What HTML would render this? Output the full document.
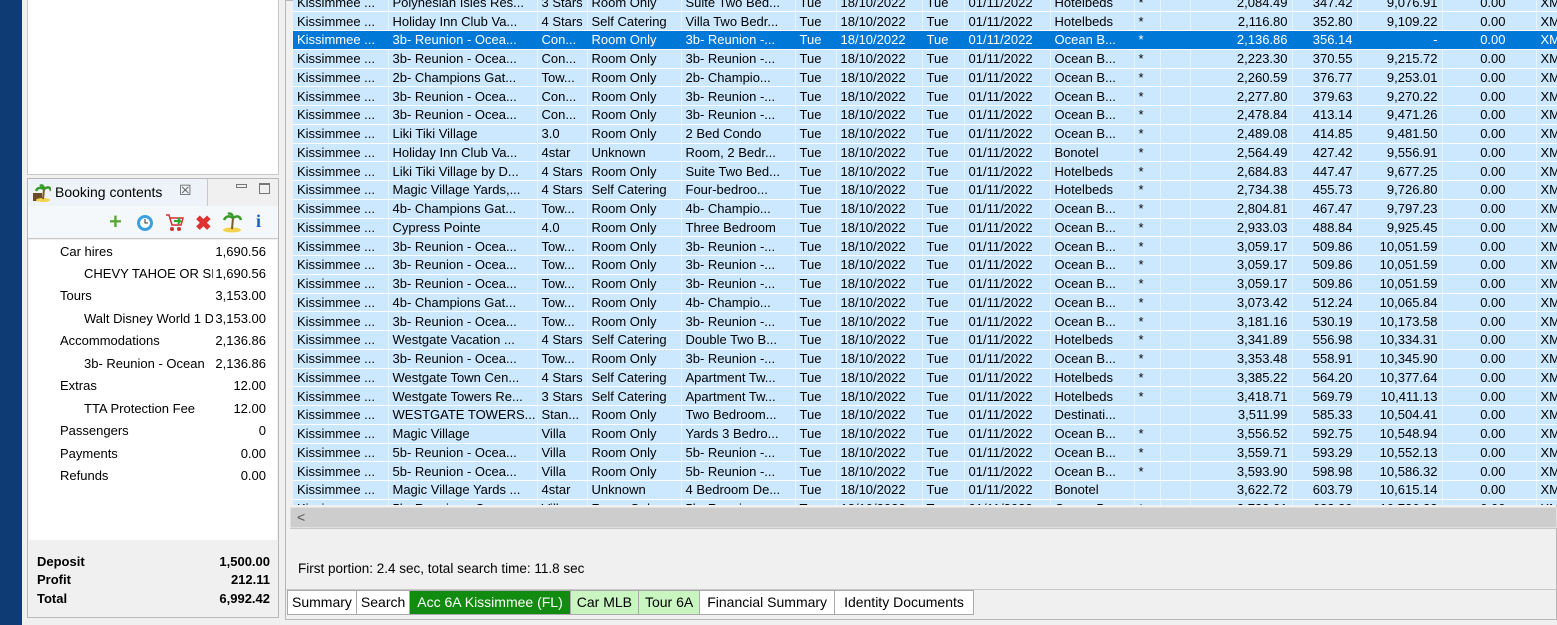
<!DOCTYPE html>
<html><head><meta charset="utf-8"><style>
*{margin:0;padding:0;box-sizing:border-box}
body{width:1557px;height:625px;overflow:hidden;background:#f0f0f0;font-family:"Liberation Sans",sans-serif;font-size:13px;color:#000;position:relative}
.abs{position:absolute}
#bar{left:0;top:0;width:22px;height:625px;background:#0e3b74}
#lp{left:26px;top:0;width:255px;height:620px;background:#f0f0f0}
#topbox{left:27px;top:0;width:252px;height:175px;background:#fff;border:1px solid #c8c8c8;border-top:none}
#bc{left:27px;top:178px;width:252px;height:440px;border:1px solid #b8b8b8;background:#f0f0f0}
#tab{left:28px;top:179px;width:180px;height:27px;background:#eef3f9;border-right:1px solid #c8c8c8}
#tb{left:28px;top:206px;width:250px;height:33px;background:#f5f8fb;border-bottom:1px solid #c8c8c8}
#list{left:29px;top:240px;width:248px;height:300px;background:#fff}
.li{position:absolute;height:20px;line-height:20px;white-space:nowrap;overflow:hidden}
.lv{position:absolute;right:8px;text-align:right;background:#fff;padding-left:2px}
#tot div{position:absolute;font-weight:bold;font-size:13px}
#rp{left:285px;top:0;width:1272px;height:620px;border:1px solid #b8b8b8;background:#f0f0f0}
#grid{left:293px;top:0;width:1264px;height:505px;overflow:hidden;background:#fff}
table{border-collapse:collapse;table-layout:fixed;position:absolute;left:0;top:-7px;width:1303px}
td{height:18.76px;padding:0 4px;white-space:nowrap;overflow:hidden;background:#cce8ff;border-right:1px solid #e8f4ff;border-bottom:1px solid #fff;font-size:13px;line-height:17px}
td.r{text-align:right}
td.z{padding-right:30px}
tr.s td{background:#0078d7;color:#fff;border-right-color:#0078d7}
#sb{left:290px;top:507px;width:1267px;height:21px;background:#cdcdcd;border:1px solid #e0e0e0}
#tabs{left:287px;top:590px;height:25px;display:flex}
#tabs div{border:1px solid #aaa;border-left:none;padding:0 5px;line-height:23px;background:#fff;font-size:14px}
</style></head><body>
<div id="bar" class="abs"></div>
<div id="lp" class="abs"></div>
<div id="topbox" class="abs"></div>
<div id="bc" class="abs"></div>
<div id="tab" class="abs">
<svg class="abs" style="left:3px;top:4px" width="20" height="20"><rect x="2" y="10" width="9" height="8" fill="#6b4a2a"/><ellipse cx="12" cy="17" rx="7" ry="2" fill="#f2d24a"/><path d="M12 16 L13 6" stroke="#7a5a2a" stroke-width="2"/><path d="M13 6 Q7 3 5 8 M13 6 Q19 2 20 8 M13 6 Q12 1 9 3" stroke="#3a9a2a" stroke-width="2.5" fill="none"/></svg>
<div class="abs" style="left:27px;top:5px;font-size:14px">Booking contents</div>
<div class="abs" style="left:151px;top:3px;font-size:14px;color:#555">☒</div>
</div>
<div class="abs" style="left:236px;top:184px;width:11px;height:4px;border:1px solid #777"></div>
<div class="abs" style="left:259px;top:183px;width:11px;height:11px;border:1px solid #777;border-top-width:2px"></div>
<div id="tb" class="abs">
<div class="abs" style="left:81px;top:6px;color:#5aa833;font-size:22px;font-weight:bold;line-height:20px">+</div>
<svg class="abs" style="left:107px;top:7px" width="20" height="20"><circle cx="10" cy="10" r="8" fill="#3aa0e0"/><circle cx="10" cy="10" r="5" fill="#fff"/><path d="M10 6v4h3" stroke="#333" fill="none"/></svg>
<svg class="abs" style="left:136px;top:6px" width="22" height="22"><path d="M2 3h3l3 10h9l2-7H6" stroke="#c33" fill="none" stroke-width="1.5"/><circle cx="8" cy="17" r="2" fill="#c33"/><circle cx="15" cy="17" r="2" fill="#c33"/><path d="M10 9h6l-2-3M16 9l-2 3" stroke="#2a2" stroke-width="2" fill="none"/></svg>
<div class="abs" style="left:167px;top:5px;color:#e03030;font-size:20px;font-weight:bold">✖</div>
<svg class="abs" style="left:193px;top:5px" width="22" height="22"><ellipse cx="11" cy="19" rx="9" ry="2.5" fill="#f2d24a"/><path d="M11 18 L12 7" stroke="#7a5a2a" stroke-width="2"/><path d="M12 7 Q6 3 3 9 M12 7 Q18 3 20 9 M12 7 Q11 1 7 3" stroke="#3a9a2a" stroke-width="2.5" fill="none"/></svg>
<div class="abs" style="left:228px;top:5px;color:#1f5fbf;font-size:18px;font-weight:bold;font-family:'Liberation Serif',serif">i</div>
</div>
<div id="list" class="abs">
<div class="li" style="left:31px;top:2px;width:214px">Car hires<span class="lv">1,690.56</span></div>
<div class="li" style="left:55px;top:24px;width:190px">CHEVY TAHOE OR SIMILAR<span class="lv">1,690.56</span></div>
<div class="li" style="left:31px;top:46px;width:214px">Tours<span class="lv">3,153.00</span></div>
<div class="li" style="left:55px;top:69px;width:190px">Walt Disney World 1 Day<span class="lv">3,153.00</span></div>
<div class="li" style="left:31px;top:91px;width:214px">Accommodations<span class="lv">2,136.86</span></div>
<div class="li" style="left:55px;top:114px;width:190px">3b- Reunion - Ocean<span class="lv">2,136.86</span></div>
<div class="li" style="left:31px;top:136px;width:214px">Extras<span class="lv">12.00</span></div>
<div class="li" style="left:55px;top:159px;width:190px">TTA Protection Fee<span class="lv">12.00</span></div>
<div class="li" style="left:31px;top:181px;width:214px">Passengers<span class="lv">0</span></div>
<div class="li" style="left:31px;top:204px;width:214px">Payments<span class="lv">0.00</span></div>
<div class="li" style="left:31px;top:226px;width:214px">Refunds<span class="lv">0.00</span></div>
</div>
<div id="tot">
<div style="left:37px;top:554px">Deposit</div><div style="left:190px;top:554px;width:80px;text-align:right">1,500.00</div>
<div style="left:37px;top:572px">Profit</div><div style="left:190px;top:572px;width:80px;text-align:right">212.11</div>
<div style="left:37px;top:591px">Total</div><div style="left:190px;top:591px;width:80px;text-align:right">6,992.42</div>
</div>
<div id="rp" class="abs"></div>
<div id="grid" class="abs">
<table>
<colgroup><col style="width:95px"><col style="width:149px"><col style="width:50px"><col style="width:94px"><col style="width:114px"><col style="width:41px"><col style="width:86px"><col style="width:42px"><col style="width:86px"><col style="width:84px"><col style="width:26px"><col style="width:30px"><col style="width:102px"><col style="width:65px"><col style="width:85px"><col style="width:94px"><col style="width:60px"></colgroup>
<tr><td>Kissimmee ...</td><td>Polynesian Isles Res...</td><td>3 Stars</td><td>Room Only</td><td>Suite Two Bed...</td><td>Tue</td><td>18/10/2022</td><td>Tue</td><td>01/11/2022</td><td>Hotelbeds</td><td>*</td><td></td><td class="r">2,084.49</td><td class="r">347.42</td><td class="r">9,076.91</td><td class="r z">0.00</td><td>XM</td></tr>
<tr><td>Kissimmee ...</td><td>Holiday Inn Club Va...</td><td>4 Stars</td><td>Self Catering</td><td>Villa Two Bedr...</td><td>Tue</td><td>18/10/2022</td><td>Tue</td><td>01/11/2022</td><td>Hotelbeds</td><td>*</td><td></td><td class="r">2,116.80</td><td class="r">352.80</td><td class="r">9,109.22</td><td class="r z">0.00</td><td>XM</td></tr>
<tr class="s"><td>Kissimmee ...</td><td>3b- Reunion - Ocea...</td><td>Con...</td><td>Room Only</td><td>3b- Reunion -...</td><td>Tue</td><td>18/10/2022</td><td>Tue</td><td>01/11/2022</td><td>Ocean B...</td><td>*</td><td></td><td class="r">2,136.86</td><td class="r">356.14</td><td class="r">-</td><td class="r z">0.00</td><td>XM</td></tr>
<tr><td>Kissimmee ...</td><td>3b- Reunion - Ocea...</td><td>Con...</td><td>Room Only</td><td>3b- Reunion -...</td><td>Tue</td><td>18/10/2022</td><td>Tue</td><td>01/11/2022</td><td>Ocean B...</td><td>*</td><td></td><td class="r">2,223.30</td><td class="r">370.55</td><td class="r">9,215.72</td><td class="r z">0.00</td><td>XM</td></tr>
<tr><td>Kissimmee ...</td><td>2b- Champions Gat...</td><td>Tow...</td><td>Room Only</td><td>2b- Champio...</td><td>Tue</td><td>18/10/2022</td><td>Tue</td><td>01/11/2022</td><td>Ocean B...</td><td>*</td><td></td><td class="r">2,260.59</td><td class="r">376.77</td><td class="r">9,253.01</td><td class="r z">0.00</td><td>XM</td></tr>
<tr><td>Kissimmee ...</td><td>3b- Reunion - Ocea...</td><td>Con...</td><td>Room Only</td><td>3b- Reunion -...</td><td>Tue</td><td>18/10/2022</td><td>Tue</td><td>01/11/2022</td><td>Ocean B...</td><td>*</td><td></td><td class="r">2,277.80</td><td class="r">379.63</td><td class="r">9,270.22</td><td class="r z">0.00</td><td>XM</td></tr>
<tr><td>Kissimmee ...</td><td>3b- Reunion - Ocea...</td><td>Con...</td><td>Room Only</td><td>3b- Reunion -...</td><td>Tue</td><td>18/10/2022</td><td>Tue</td><td>01/11/2022</td><td>Ocean B...</td><td>*</td><td></td><td class="r">2,478.84</td><td class="r">413.14</td><td class="r">9,471.26</td><td class="r z">0.00</td><td>XM</td></tr>
<tr><td>Kissimmee ...</td><td>Liki Tiki Village</td><td>3.0</td><td>Room Only</td><td>2 Bed Condo</td><td>Tue</td><td>18/10/2022</td><td>Tue</td><td>01/11/2022</td><td>Ocean B...</td><td>*</td><td></td><td class="r">2,489.08</td><td class="r">414.85</td><td class="r">9,481.50</td><td class="r z">0.00</td><td>XM</td></tr>
<tr><td>Kissimmee ...</td><td>Holiday Inn Club Va...</td><td>4star</td><td>Unknown</td><td>Room, 2 Bedr...</td><td>Tue</td><td>18/10/2022</td><td>Tue</td><td>01/11/2022</td><td>Bonotel</td><td>*</td><td></td><td class="r">2,564.49</td><td class="r">427.42</td><td class="r">9,556.91</td><td class="r z">0.00</td><td>XM</td></tr>
<tr><td>Kissimmee ...</td><td>Liki Tiki Village by D...</td><td>4 Stars</td><td>Room Only</td><td>Suite Two Bed...</td><td>Tue</td><td>18/10/2022</td><td>Tue</td><td>01/11/2022</td><td>Hotelbeds</td><td>*</td><td></td><td class="r">2,684.83</td><td class="r">447.47</td><td class="r">9,677.25</td><td class="r z">0.00</td><td>XM</td></tr>
<tr><td>Kissimmee ...</td><td>Magic Village Yards,...</td><td>4 Stars</td><td>Self Catering</td><td>Four-bedroo...</td><td>Tue</td><td>18/10/2022</td><td>Tue</td><td>01/11/2022</td><td>Hotelbeds</td><td>*</td><td></td><td class="r">2,734.38</td><td class="r">455.73</td><td class="r">9,726.80</td><td class="r z">0.00</td><td>XM</td></tr>
<tr><td>Kissimmee ...</td><td>4b- Champions Gat...</td><td>Tow...</td><td>Room Only</td><td>4b- Champio...</td><td>Tue</td><td>18/10/2022</td><td>Tue</td><td>01/11/2022</td><td>Ocean B...</td><td>*</td><td></td><td class="r">2,804.81</td><td class="r">467.47</td><td class="r">9,797.23</td><td class="r z">0.00</td><td>XM</td></tr>
<tr><td>Kissimmee ...</td><td>Cypress Pointe</td><td>4.0</td><td>Room Only</td><td>Three Bedroom</td><td>Tue</td><td>18/10/2022</td><td>Tue</td><td>01/11/2022</td><td>Ocean B...</td><td>*</td><td></td><td class="r">2,933.03</td><td class="r">488.84</td><td class="r">9,925.45</td><td class="r z">0.00</td><td>XM</td></tr>
<tr><td>Kissimmee ...</td><td>3b- Reunion - Ocea...</td><td>Tow...</td><td>Room Only</td><td>3b- Reunion -...</td><td>Tue</td><td>18/10/2022</td><td>Tue</td><td>01/11/2022</td><td>Ocean B...</td><td>*</td><td></td><td class="r">3,059.17</td><td class="r">509.86</td><td class="r">10,051.59</td><td class="r z">0.00</td><td>XM</td></tr>
<tr><td>Kissimmee ...</td><td>3b- Reunion - Ocea...</td><td>Tow...</td><td>Room Only</td><td>3b- Reunion -...</td><td>Tue</td><td>18/10/2022</td><td>Tue</td><td>01/11/2022</td><td>Ocean B...</td><td>*</td><td></td><td class="r">3,059.17</td><td class="r">509.86</td><td class="r">10,051.59</td><td class="r z">0.00</td><td>XM</td></tr>
<tr><td>Kissimmee ...</td><td>3b- Reunion - Ocea...</td><td>Tow...</td><td>Room Only</td><td>3b- Reunion -...</td><td>Tue</td><td>18/10/2022</td><td>Tue</td><td>01/11/2022</td><td>Ocean B...</td><td>*</td><td></td><td class="r">3,059.17</td><td class="r">509.86</td><td class="r">10,051.59</td><td class="r z">0.00</td><td>XM</td></tr>
<tr><td>Kissimmee ...</td><td>4b- Champions Gat...</td><td>Tow...</td><td>Room Only</td><td>4b- Champio...</td><td>Tue</td><td>18/10/2022</td><td>Tue</td><td>01/11/2022</td><td>Ocean B...</td><td>*</td><td></td><td class="r">3,073.42</td><td class="r">512.24</td><td class="r">10,065.84</td><td class="r z">0.00</td><td>XM</td></tr>
<tr><td>Kissimmee ...</td><td>3b- Reunion - Ocea...</td><td>Tow...</td><td>Room Only</td><td>3b- Reunion -...</td><td>Tue</td><td>18/10/2022</td><td>Tue</td><td>01/11/2022</td><td>Ocean B...</td><td>*</td><td></td><td class="r">3,181.16</td><td class="r">530.19</td><td class="r">10,173.58</td><td class="r z">0.00</td><td>XM</td></tr>
<tr><td>Kissimmee ...</td><td>Westgate Vacation ...</td><td>4 Stars</td><td>Self Catering</td><td>Double Two B...</td><td>Tue</td><td>18/10/2022</td><td>Tue</td><td>01/11/2022</td><td>Hotelbeds</td><td>*</td><td></td><td class="r">3,341.89</td><td class="r">556.98</td><td class="r">10,334.31</td><td class="r z">0.00</td><td>XM</td></tr>
<tr><td>Kissimmee ...</td><td>3b- Reunion - Ocea...</td><td>Tow...</td><td>Room Only</td><td>3b- Reunion -...</td><td>Tue</td><td>18/10/2022</td><td>Tue</td><td>01/11/2022</td><td>Ocean B...</td><td>*</td><td></td><td class="r">3,353.48</td><td class="r">558.91</td><td class="r">10,345.90</td><td class="r z">0.00</td><td>XM</td></tr>
<tr><td>Kissimmee ...</td><td>Westgate Town Cen...</td><td>4 Stars</td><td>Self Catering</td><td>Apartment Tw...</td><td>Tue</td><td>18/10/2022</td><td>Tue</td><td>01/11/2022</td><td>Hotelbeds</td><td>*</td><td></td><td class="r">3,385.22</td><td class="r">564.20</td><td class="r">10,377.64</td><td class="r z">0.00</td><td>XM</td></tr>
<tr><td>Kissimmee ...</td><td>Westgate Towers Re...</td><td>3 Stars</td><td>Self Catering</td><td>Apartment Tw...</td><td>Tue</td><td>18/10/2022</td><td>Tue</td><td>01/11/2022</td><td>Hotelbeds</td><td>*</td><td></td><td class="r">3,418.71</td><td class="r">569.79</td><td class="r">10,411.13</td><td class="r z">0.00</td><td>XM</td></tr>
<tr><td>Kissimmee ...</td><td>WESTGATE TOWERS...</td><td>Stan...</td><td>Room Only</td><td>Two Bedroom...</td><td>Tue</td><td>18/10/2022</td><td>Tue</td><td>01/11/2022</td><td>Destinati...</td><td></td><td></td><td class="r">3,511.99</td><td class="r">585.33</td><td class="r">10,504.41</td><td class="r z">0.00</td><td>XM</td></tr>
<tr><td>Kissimmee ...</td><td>Magic Village</td><td>Villa</td><td>Room Only</td><td>Yards 3 Bedro...</td><td>Tue</td><td>18/10/2022</td><td>Tue</td><td>01/11/2022</td><td>Ocean B...</td><td>*</td><td></td><td class="r">3,556.52</td><td class="r">592.75</td><td class="r">10,548.94</td><td class="r z">0.00</td><td>XM</td></tr>
<tr><td>Kissimmee ...</td><td>5b- Reunion - Ocea...</td><td>Villa</td><td>Room Only</td><td>5b- Reunion -...</td><td>Tue</td><td>18/10/2022</td><td>Tue</td><td>01/11/2022</td><td>Ocean B...</td><td>*</td><td></td><td class="r">3,559.71</td><td class="r">593.29</td><td class="r">10,552.13</td><td class="r z">0.00</td><td>XM</td></tr>
<tr><td>Kissimmee ...</td><td>5b- Reunion - Ocea...</td><td>Villa</td><td>Room Only</td><td>5b- Reunion -...</td><td>Tue</td><td>18/10/2022</td><td>Tue</td><td>01/11/2022</td><td>Ocean B...</td><td>*</td><td></td><td class="r">3,593.90</td><td class="r">598.98</td><td class="r">10,586.32</td><td class="r z">0.00</td><td>XM</td></tr>
<tr><td>Kissimmee ...</td><td>Magic Village Yards ...</td><td>4star</td><td>Unknown</td><td>4 Bedroom De...</td><td>Tue</td><td>18/10/2022</td><td>Tue</td><td>01/11/2022</td><td>Bonotel</td><td></td><td></td><td class="r">3,622.72</td><td class="r">603.79</td><td class="r">10,615.14</td><td class="r z">0.00</td><td>XM</td></tr>
<tr><td>Kissimmee ...</td><td>5b- Reunion - Ocea...</td><td>Villa</td><td>Room Only</td><td>5b- Reunion -...</td><td>Tue</td><td>18/10/2022</td><td>Tue</td><td>01/11/2022</td><td>Ocean B...</td><td>*</td><td></td><td class="r">3,733.01</td><td class="r">622.20</td><td class="r">10,726.22</td><td class="r z">0.00</td><td>XM</td></tr>
</table>
</div>
<div id="sb" class="abs"><div class="abs" style="left:6px;top:1px;color:#555;font-size:14px">&lt;</div></div>
<div class="abs" style="left:290px;top:528px;width:1267px;height:0;border-top:1px solid #c8c8c8"></div>
<div class="abs" style="left:298px;top:561px;font-size:13.5px">First portion: 2.4 sec, total search time: 11.8 sec</div>
<div class="abs" style="left:286px;top:589px;width:1271px;border-top:1px solid #c8c8c8"></div>
<div id="tabs" class="abs">
<div style="border-left:1px solid #aaa;padding:0 4px">Summary</div><div style="padding:0 4px">Search</div><div style="background:#118c11;color:#fff;padding:0 7px">Acc 6A Kissimmee (FL)</div><div style="background:#c8f5c0;padding:0 6px">Car MLB</div><div style="background:#c8f5c0;padding:0 6px">Tour 6A</div><div style="padding:0 7px">Financial Summary</div><div style="padding:0 9px">Identity Documents</div>
</div>
</body></html>
